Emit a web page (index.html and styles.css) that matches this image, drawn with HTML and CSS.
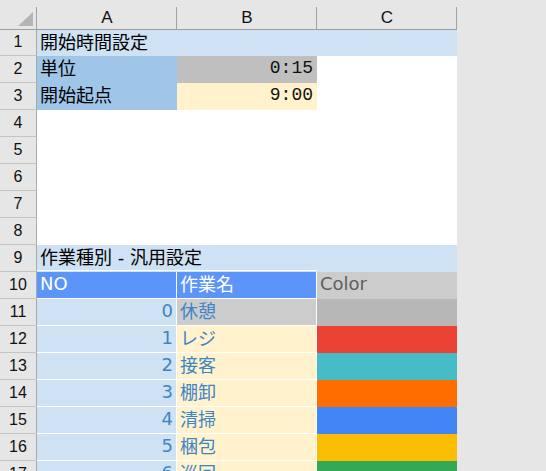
FILE: index.html
```html
<!DOCTYPE html>
<html lang="ja">
<head>
<meta charset="utf-8">
<link rel="stylesheet" href="styles.css">
</head>
<body>
<div class="sheet">
  <div class="corner"><svg width="36" height="29" viewBox="0 0 36 29"><polygon points="33,12 33,26 18,26" fill="#b4b4b4"/></svg></div>
  <div class="colh">A</div>
  <div class="colh">B</div>
  <div class="colh">C</div>

  <div class="rowh">1</div>
  <div class="cell span3 lb">開始時間設定</div>

  <div class="rowh">2</div>
  <div class="cell mb">単位</div>
  <div class="cell gray num time">0:15</div>
  <div class="cell"></div>

  <div class="rowh">3</div>
  <div class="cell mb">開始起点</div>
  <div class="cell cream num time">9:00</div>
  <div class="cell"></div>

  <div class="rowh">4</div><div class="cell"></div><div class="cell"></div><div class="cell"></div>
  <div class="rowh">5</div><div class="cell"></div><div class="cell"></div><div class="cell"></div>
  <div class="rowh">6</div><div class="cell"></div><div class="cell"></div><div class="cell"></div>
  <div class="rowh">7</div><div class="cell"></div><div class="cell"></div><div class="cell"></div>
  <div class="rowh">8</div><div class="cell"></div><div class="cell"></div><div class="cell"></div>

  <div class="rowh">9</div>
  <div class="cell span3 lb section">作業種別 - 汎用設定</div>

  <div class="rowh">10</div>
  <div class="cell hd wb wr">NO</div>
  <div class="cell hd wb wr">作業名</div>
  <div class="cell hdc">Color</div>

  <div class="rowh">11</div>
  <div class="cell lb wb wr num blue">0</div>
  <div class="cell gry wb wr blue">休憩</div>
  <div class="cell sw-break"></div>

  <div class="rowh">12</div>
  <div class="cell lb wb wr num blue">1</div>
  <div class="cell cream wb wr blue">レジ</div>
  <div class="cell sw-red"></div>

  <div class="rowh">13</div>
  <div class="cell lb wb wr num blue">2</div>
  <div class="cell cream wb wr blue">接客</div>
  <div class="cell sw-teal"></div>

  <div class="rowh">14</div>
  <div class="cell lb wb wr num blue">3</div>
  <div class="cell cream wb wr blue">棚卸</div>
  <div class="cell sw-orange"></div>

  <div class="rowh">15</div>
  <div class="cell lb wb wr num blue">4</div>
  <div class="cell cream wb wr blue">清掃</div>
  <div class="cell sw-blue"></div>

  <div class="rowh">16</div>
  <div class="cell lb wb wr num blue">5</div>
  <div class="cell cream wb wr blue">梱包</div>
  <div class="cell sw-yellow"></div>

  <div class="rowh">17</div>
  <div class="cell lb wb wr num blue">6</div>
  <div class="cell cream wb wr blue">巡回</div>
  <div class="cell sw-green"></div>
</div>
</body>
</html>
```
FILE: styles.css
```css
html, body {
  margin: 0;
  padding: 0;
  background: #e6e6e6;
  overflow: hidden;
  height: 471px;
}

.sheet {
  display: grid;
  grid-template-columns: 37px 140px 140px 140px;
  grid-template-rows: 30px 26px repeat(16, 27px);
  width: 457px;
  background: #ffffff;
  font-family: "DejaVu Sans", "Noto Sans CJK JP", sans-serif;
  font-size: 18px;
}

.corner,
.colh {
  box-sizing: border-box;
  background: #e6e6e6 linear-gradient(#a3a3a3, #a3a3a3) right 7px / 1px 22px no-repeat;
  border-bottom: 1px solid #9e9e9e;
}

.corner svg {
  display: block;
}

.colh {
  display: flex;
  align-items: center;
  justify-content: center;
  padding-top: 7px;
  font-family: "Liberation Sans", Arial, sans-serif;
  font-size: 17px;
  color: #111;
}

.rowh {
  box-sizing: border-box;
  background: #e6e6e6;
  border-right: 1px solid #a9a9a9;
  border-bottom: 1px solid #c4c4c4;
  display: flex;
  align-items: center;
  justify-content: center;
  padding-bottom: 1px;
  font-family: "Liberation Sans", Arial, sans-serif;
  font-size: 16px;
  color: #111;
}

.cell {
  box-sizing: border-box;
  border-right: 1px solid transparent;
  border-bottom: 1px solid transparent;
  display: flex;
  align-items: center;
  padding: 0 3px 4px 3px;
  white-space: nowrap;
  overflow: visible;
  color: #000;
  min-width: 0;
}

.span3 { grid-column: span 3; }

.num { justify-content: flex-end; }

.time {
  font-family: "Liberation Mono", monospace;
  font-size: 18px;
  padding-bottom: 2px;
  color: #111;
}

.lb { background: #cfe2f3; }
.mb { background: #9fc5e8; }
.gray { background: #bfbfbf; }
.cream { background: #fff2cc; }
.gry { background: #cccccc; }

.section {
  background: #cfe2f3 linear-gradient(#ffffff, #ffffff) left bottom / 280px 1px no-repeat;
}

.hd {
  background: #5b95f9;
  color: #ffffff;
}

.hdc {
  background: #cccccc;
  color: #5f5f5f;
}

.blue { color: #3d85c6; }

.wb { border-bottom-color: #ffffff; }
.wr { border-right-color: #ffffff; }

.sw-break { background: #b7b7b7; }
.sw-red { background: #ea4335; }
.sw-teal { background: #46bdc6; }
.sw-orange { background: #ff6d01; }
.sw-blue { background: #4285f4; }
.sw-yellow { background: #fbbc04; }
.sw-green { background: #34a853; }
```
